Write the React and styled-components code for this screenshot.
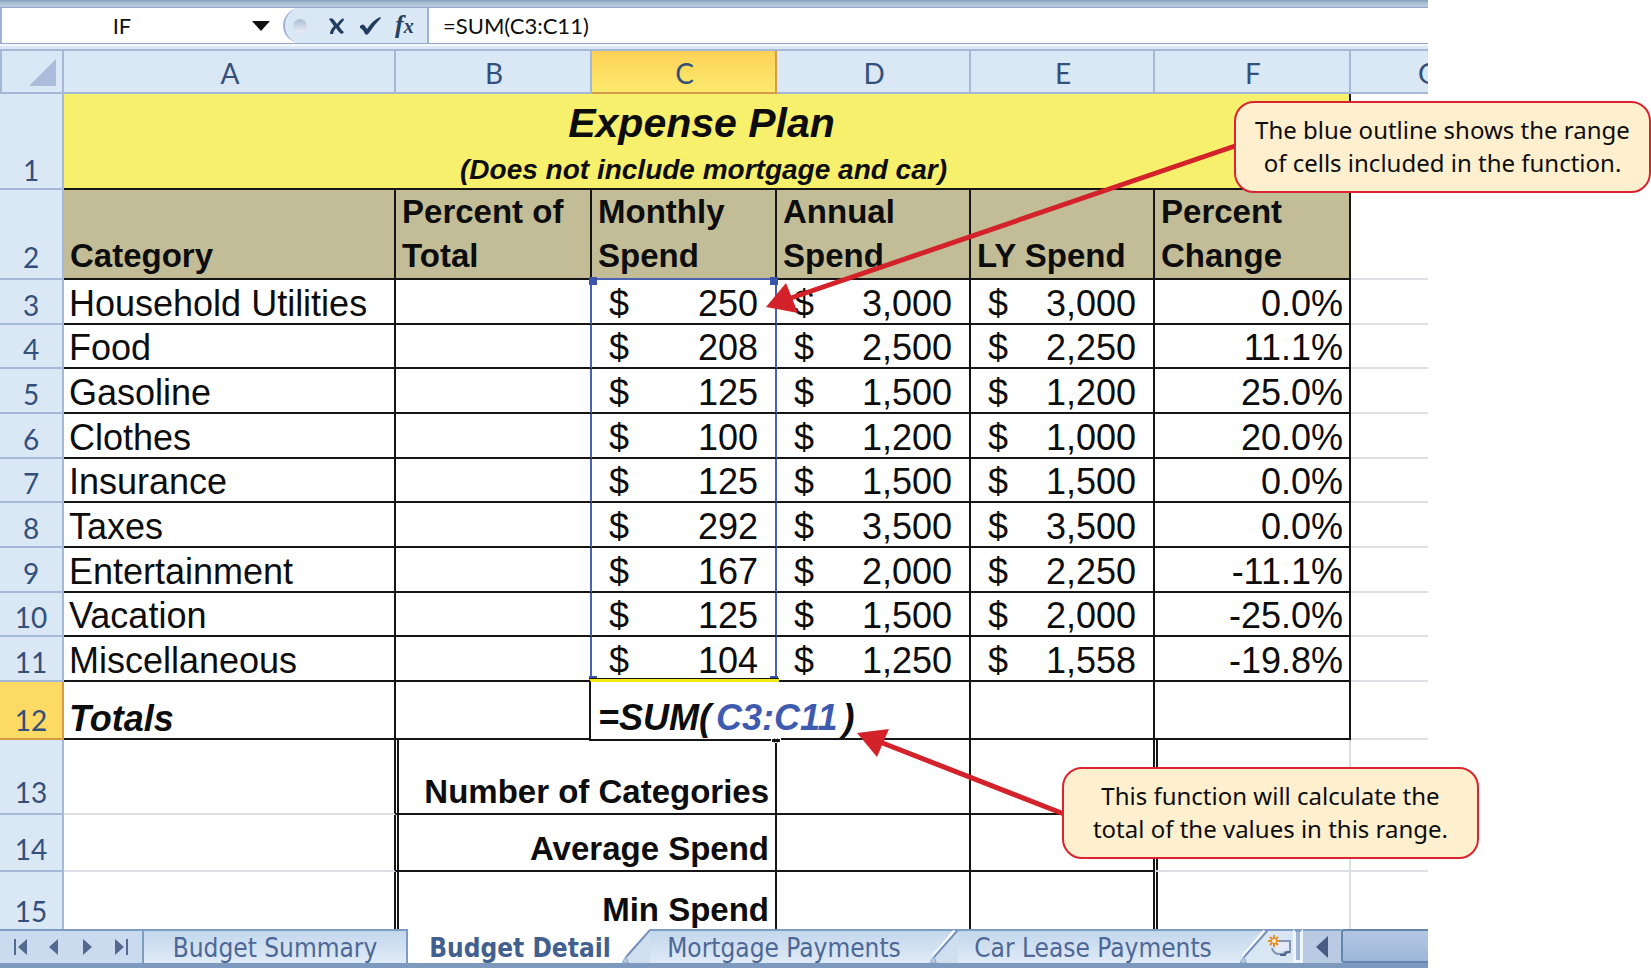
import React from "react";
import styled, { createGlobalStyle, css } from "styled-components";

const columns = [64, 332, 196, 185, 194, 184, 196, 77];

const expenses = [
  { row: 3, name: "Household Utilities", month: "250", annual: "3,000", ly: "3,000", change: "0.0%" },
  { row: 4, name: "Food", month: "208", annual: "2,500", ly: "2,250", change: "11.1%" },
  { row: 5, name: "Gasoline", month: "125", annual: "1,500", ly: "1,200", change: "25.0%" },
  { row: 6, name: "Clothes", month: "100", annual: "1,200", ly: "1,000", change: "20.0%" },
  { row: 7, name: "Insurance", month: "125", annual: "1,500", ly: "1,500", change: "0.0%" },
  { row: 8, name: "Taxes", month: "292", annual: "3,500", ly: "3,500", change: "0.0%" },
  { row: 9, name: "Entertainment", month: "167", annual: "2,000", ly: "2,250", change: "-11.1%" },
  { row: 10, name: "Vacation", month: "125", annual: "1,500", ly: "2,000", change: "-25.0%" },
  { row: 11, name: "Miscellaneous", month: "104", annual: "1,250", ly: "1,558", change: "-19.8%" },
];

const stats = [
  { row: 13, label: "Number of Categories", height: 75 },
  { row: 14, label: "Average Spend", height: 57 },
  { row: 15, label: "Min Spend", height: 57, last: true },
];

function Amount({ children }) {
  return (
    <Money>
      <span>$</span>
      <span>{children}</span>
    </Money>
  );
}

/* slanted left edge of a sheet tab */
function Slant({ $afterActive, $plain }) {
  return (
    <SlantSvg viewBox="0 0 28 34" $white={$afterActive} aria-hidden="true">
      {!$afterActive && <path d="M0 1 H28" stroke="#7f9cc3" strokeWidth="2" />}
      <path d="M28 0 V34 H3 Q2 30 6 26 Z" fill={$plain ? "#d9e6f4" : "#cfdff0"} />
      <path d="M25 2 L3 28" stroke="#fff" strokeWidth="4" fill="none" />
      <path d="M28 1 L5 27 Q2 31 6 34" stroke="#7590b8" strokeWidth="2" fill="none" />
      <path d="M4 27 L6 34 H0 Z" fill="#b9cde6" stroke="#8ba6ca" strokeWidth="1" />
    </SlantSvg>
  );
}

function FormulaBar() {
  return (
    <>
      <RibbonEdge />
      <Bar>
        <NameBox>
          <NameInput aria-label="Name box" defaultValue="IF" />
          <DropButton type="button" aria-label="Open name list">
            <svg width="18" height="10" viewBox="0 0 18 10">
              <path d="M0 0 H18 L9 10 Z" fill="#111" />
            </svg>
          </DropButton>
        </NameBox>
        <Tools>
          <Knob />
          <ToolButton type="button" aria-label="Cancel">
            <svg width="18" height="18" viewBox="0 0 18 18">
              <path d="M1 2 Q4 0 6 3 L9 7 Q12 3 15 1 L16 3 L11 9 Q14 14 16 15 L14 17 Q11 16 8 11 Q6 13 5 17 L2 17 Q2 13 6 9 Q3 5 1 2 Z" fill="#203d5f" />
            </svg>
          </ToolButton>
          <ToolButton type="button" aria-label="Enter">
            <svg width="23" height="18" viewBox="0 0 23 18">
              <path d="M1 9 Q4 6 6 9 L8 12 Q14 3 21 0 L22 1 Q16 7 10 16 Q8 19 6 17 Q4 12 1 11 Z" fill="#203d5f" />
            </svg>
          </ToolButton>
          <FxButton type="button" aria-label="Insert function">
            f<small>x</small>
          </FxButton>
        </Tools>
        <FormulaInput aria-label="Formula" defaultValue="=SUM(C3:C11)" />
      </Bar>
      <BarGap />
    </>
  );
}

function Sheet() {
  return (
    <Grid>
      <colgroup>
        {columns.map((w, i) => (
          <Column key={i} $w={w} />
        ))}
      </colgroup>
      <thead>
        <tr>
          <Corner>
            <svg width="27" height="27" viewBox="0 0 27 27" aria-hidden="true">
              <path d="M27 0 V27 H0 Z" fill="#abbcda" />
            </svg>
          </Corner>
          <ColHead>A</ColHead>
          <ColHead>B</ColHead>
          <ColHead $active>C</ColHead>
          <ColHead>D</ColHead>
          <ColHead>E</ColHead>
          <ColHead>F</ColHead>
          <ColHead $cut>G</ColHead>
        </tr>
      </thead>
      <tbody>
        <Row $h={96}>
          <RowHead>1</RowHead>
          <TitleCell colSpan={6}>
            <Title>Expense Plan</Title>
            <Subtitle>(Does not include mortgage and car)</Subtitle>
          </TitleCell>
          <Blank />
        </Row>
        <Row $h={90}>
          <RowHead $lift>2</RowHead>
          <Label>Category</Label>
          <Label>Percent of<br />Total</Label>
          <Label $range>
            Monthly<br />Spend
            <Handle $top $left />
            <Handle $top />
          </Label>
          <Label>Annual<br />Spend</Label>
          <Label>LY Spend</Label>
          <Label>Percent<br />Change</Label>
          <Blank />
        </Row>
        {expenses.map((e, i) => (
          <Row key={e.row} $h={i % 3 === 1 ? 44 : 45}>
            <RowHead>{e.row}</RowHead>
            <Cell>{e.name}</Cell>
            <Cell $range />
            <Cell $range>
              <Amount>{e.month}</Amount>
              {e.row === 11 && (
                <>
                  <Handle $left />
                  <Handle />
                </>
              )}
            </Cell>
            <Cell><Amount>{e.annual}</Amount></Cell>
            <Cell><Amount>{e.ly}</Amount></Cell>
            <Cell $right>{e.change}</Cell>
            <Blank />
          </Row>
        ))}
        <Row $h={58}>
          <RowHead $active>12</RowHead>
          <Cell $total>Totals</Cell>
          <Cell />
          <EditCell>
            <Editor>
              =SUM(<Ref>C3:C11</Ref>)
            </Editor>
            <FillHandle />
          </EditCell>
          <Cell />
          <Cell />
          <Cell />
          <Blank />
        </Row>
        {stats.map((s) => (
          <Row key={s.row} $h={s.height}>
            <RowHead $lift={!s.last}>{s.row}</RowHead>
            <Blank $edge />
            <StatLabel colSpan={2} $last={s.last}>{s.label}</StatLabel>
            <StatCell $last={s.last} />
            <StatCell $last={s.last} />
            <Blank $double $side />
            <Blank />
          </Row>
        ))}
      </tbody>
    </Grid>
  );
}

function TabBar() {
  return (
    <Tabs>
      <TabNav>
        <NavButton type="button" aria-label="First sheet">
          <svg width="14" height="18" viewBox="0 0 14 18"><path d="M0 1 H2 V17 H0 Z M13 1 V17 L4 9 Z" /></svg>
        </NavButton>
        <NavButton type="button" aria-label="Previous sheet">
          <svg width="14" height="18" viewBox="0 0 14 18"><path d="M11 1 V17 L2 9 Z" /></svg>
        </NavButton>
        <NavButton type="button" aria-label="Next sheet">
          <svg width="14" height="18" viewBox="0 0 14 18"><path d="M2 1 V17 L11 9 Z" /></svg>
        </NavButton>
        <NavButton type="button" aria-label="Last sheet">
          <svg width="14" height="18" viewBox="0 0 14 18"><path d="M12 1 H14 V17 H12 Z M1 1 V17 L10 9 Z" /></svg>
        </NavButton>
      </TabNav>
      <Tab type="button" $w={266} $first>Budget Summary</Tab>
      <Tab type="button" $w={214} $active>Budget Detail</Tab>
      <Slant $afterActive />
      <Tab type="button" $w={280}>Mortgage Payments</Tab>
      <Slant />
      <Tab type="button" $w={282}>Car Lease Payments</Tab>
      <Slant $plain />
      <NewSheet type="button" aria-label="Insert sheet">
        <svg width="24" height="24" viewBox="0 0 24 24">
          <path d="M8 5 H22 V16 H8 Z" fill="#e4ebf6" />
          <path d="M4 13 Q5 18 10 19 H16 Q16 16 22 17 V6 H12" fill="none" stroke="#8495b8" strokeWidth="2" />
          <path d="M12 20 H17 Q17 17 22 17" fill="none" stroke="#50648f" strokeWidth="2" />
          <path d="M6 0 V12 M0 6 H12 M2 2 L10 10 M10 2 L2 10" stroke="#df8d2b" strokeWidth="2" />
          <circle cx="6" cy="6" r="2" fill="#fff3c8" />
        </svg>
      </NewSheet>
      <Grip />
      <ScrollButton type="button" aria-label="Scroll left">
        <svg width="12" height="22" viewBox="0 0 12 22"><path d="M12 0 V22 L0 11 Z" fill="#475b85" /></svg>
      </ScrollButton>
      <Thumb />
    </Tabs>
  );
}

export default function App() {
  return (
    <>
      <GlobalStyle />
      <Page>
        <Workbook>
          <FormulaBar />
          <Sheet />
          <TabBar />
        </Workbook>
        <Arrows viewBox="0 0 1651 970" preserveAspectRatio="none" aria-hidden="true">
          <path d="M1235 146 L788 299" />
          <polygon points="766,307 786,283 798,313" />
          <path d="M1064 814 L880 742" />
          <polygon points="857,733 889,729 877,757" />
        </Arrows>
        <RangeNote>
          The blue outline shows the range<br />of cells included in the function.
        </RangeNote>
        <SumNote>
          This function will calculate the<br />total of the values in this range.
        </SumNote>
      </Page>
    </>
  );
}

const GlobalStyle = createGlobalStyle`
  * {
    box-sizing: border-box;
  }

  body {
    margin: 0;
    background: #fff;
    font-family: "Liberation Sans", Arial, sans-serif;
    color: #0d0d0d;
  }

  button, input {
    border: none;
    padding: 0;
    margin: 0;
    background: none;
    font: inherit;
    color: inherit;
    outline: none;
  }
`;

const Page = styled.main`
  position: relative;
  overflow: hidden;
`;

const Workbook = styled.div`
  width: 86.5%;
  overflow: hidden;
`;

const RibbonEdge = styled.div`
  height: 8px;
  border-bottom: 1px solid #93a8c8;
  background: linear-gradient(#7f9dbc, #a9bed5 40%, #bccbe0);
`;

const Bar = styled.div`
  display: flex;
  height: 36px;
  border-bottom: 1px solid #93a8c8;
  font-family: Lato, Carlito, sans-serif;
  font-size: 22px;
`;

const BarGap = styled.div`
  height: 7px;
  border-top: 2px solid #f4f8fc;
  border-bottom: 2px solid #a6b8d8;
  background: #dce8f5;
`;

const NameBox = styled.div`
  display: flex;
  align-items: center;
  width: 283px;
  border-left: 2px solid #9fb2d2;
`;

const NameInput = styled.input`
  width: 240px;
  text-align: center;
`;

const DropButton = styled.button`
  display: flex;
  margin-left: 10px;
`;

const Tools = styled.div`
  display: flex;
  align-items: center;
  gap: 13px;
  width: 146px;
  padding-left: 8px;
  background: #dae7f5;
  border-left: 2px solid #9fb2d2;
  border-right: 2px solid #9fb2d2;
  border-radius: 18px 0 0 18px;
`;

const Knob = styled.span`
  width: 14px;
  height: 14px;
  margin-right: 8px;
  border-radius: 50%;
  background: linear-gradient(#aebdd2, #e9eff7);
`;

const ToolButton = styled.button`
  display: flex;
`;

const FxButton = styled.button`
  font-family: "Liberation Serif", serif;
  font-size: 26px;
  line-height: 30px;
  font-weight: bold;
  font-style: italic;
  color: #26415f;

  small {
    font-size: 20px;
  }
`;

const FormulaInput = styled.input`
  flex: 1;
  padding-left: 14px;
`;

const Grid = styled.table`
  width: 100%;
  table-layout: fixed;
  border-collapse: separate;
  border-spacing: 0;
  font-size: 36px;
  line-height: 38px;

  td, th {
    padding: 0;
    vertical-align: bottom;
  }
`;

const Column = styled.col`
  width: ${(p) => (p.$w / 1428) * 100}%;
`;

const Row = styled.tr`
  height: ${(p) => p.$h}px;
`;

const headFont = css`
  font-family: Lato, Carlito, sans-serif;
  font-size: 28px;
  line-height: 34px;
  font-weight: normal;
  color: #34507a;
`;

const Corner = styled.th`
  background: #dae7f5;
  border: 2px solid #a6b8d8;
  border-top: none;
  text-align: right;

  svg {
    display: block;
    margin: 0 6px 6px auto;
  }
`;

const ColHead = styled.th`
  ${headFont}
  height: 43px;
  && {
    padding-bottom: 2px;
    padding-left: ${(p) => (p.$cut ? 67 : 2)}px;
  }
  overflow: hidden;
  background: ${(p) => (p.$active ? "linear-gradient(#ffd257, #fbea6e)" : "#dae7f5")};
  border-right: ${(p) => (p.$cut ? 0 : 2)}px solid ${(p) => (p.$active ? "#d69c45" : "#a6b8d8")};
  border-bottom: 2px solid ${(p) => (p.$active ? "#d69c45" : "#a6b8d8")};
`;

const RowHead = styled.th`
  ${headFont}
  && {
    padding-bottom: ${(p) => (p.$lift ? 4 : 1)}px;
  }
  background: ${(p) => (p.$active ? "#fdda63" : "#dae7f5")};
  border-right: 2px solid ${(p) => (p.$active ? "#d69c45" : "#a6b8d8")};
  border-bottom: 2px solid ${(p) => (p.$active ? "#d69c45" : "#a6b8d8")};

  tr:last-child > & {
    border-bottom: none;
  }
`;

const Cell = styled.td`
  position: relative;
  border-right: 2px solid ${(p) => (p.$range ? "#4a62b0" : "#151515")};
  border-bottom: 2px solid #151515;
  text-align: ${(p) => (p.$right ? "right" : "left")};
  white-space: nowrap;

  && {
    padding: 0 6px 0 5px;
  }

  ${(p) => p.$total && css`
    font-weight: bold;
    font-style: italic;
  `}
`;

const TitleCell = styled.td`
  background: #f7f06c;
  border-right: 2px solid #151515;
  border-bottom: 2px solid #151515;
  text-align: center;
  font-weight: bold;
  font-style: italic;

  && {
    padding-right: 6px;
  }
`;

const Title = styled.div`
  padding-right: 4px;
  font-size: 41px;
  line-height: 58px;
`;

const Subtitle = styled.div`
  font-size: 28px;
  line-height: 36px;
`;

const Label = styled.td`
  position: relative;
  background: #c3bd97;
  border-right: 2px solid #151515;
  border-bottom: 2px solid ${(p) => (p.$range ? "#4a62b0" : "#151515")};
  font-size: 33px;
  line-height: 44px;
  font-weight: bold;
  white-space: nowrap;

  && {
    padding-left: 6px;
  }
`;

const Money = styled.div`
  display: flex;
  justify-content: space-between;
  padding: 0 11px 0 12px;
`;

/* corner grips of the highlighted range */
const Handle = styled.i`
  position: absolute;
  width: 8px;
  height: ${(p) => (p.$top ? 8 : 6)}px;
  bottom: ${(p) => (p.$top ? -7 : -2)}px;
  ${(p) => (p.$left ? "left: -3px;" : "right: -3px;")}
  background: #3a55ab;
  z-index: 1;
`;

const Blank = styled.td`
  border-bottom: 2px solid #dddfe5;

  tr:last-child > & {
    border-bottom: none;
  }

  ${(p) => p.$side && "border-right: 2px solid #dddfe5;"}
  ${(p) => p.$edge && "border-right: 2px solid #151515;"}
  ${(p) => p.$double && "box-shadow: inset 1px 0 #fff, inset 3px 0 #151515;"}
`;

const EditCell = styled.td`
  position: relative;
  border-bottom: 2px solid #151515;
`;

const Editor = styled.div`
  position: absolute;
  inset: -3px -2px -3px -3px;
  z-index: 2;
  padding: 17px 0 0 7px;
  border: 2px solid #151515;
  border-top: 3px solid #f2ea12;
  border-right: none;
  box-shadow: 0 -1px #151515;
  background: #fff;
  font-weight: bold;
  font-style: italic;
  white-space: nowrap;
`;

const Ref = styled.span`
  padding: 0 5px;
  color: #3f5bb0;
`;

const FillHandle = styled.i`
  position: absolute;
  right: -4px;
  bottom: -5px;
  z-index: 3;
  width: 10px;
  height: 5px;
  border: 1px dashed #fff;
  background: #151515;
`;

const StatLabel = styled.td`
  border-right: 2px solid #151515;
  border-bottom: ${(p) => (p.$last ? 0 : 2)}px solid #151515;
  box-shadow: inset 1px 0 #fff, inset 3px 0 #151515;
  font-size: 33px;
  font-weight: bold;
  text-align: right;
  white-space: nowrap;

  && {
    padding: 0 6px ${(p) => (p.$last ? 0 : 2)}px 0;
  }
`;

const StatCell = styled.td`
  border-right: 2px solid #151515;
  border-bottom: ${(p) => (p.$last ? 0 : 2)}px solid #151515;
`;

const Tabs = styled.div`
  display: flex;
  height: 39px;
  border-bottom: 5px solid #7e99be;
  background: #cfdff0;
  font-family: "DejaVu Sans Condensed", Tahoma, sans-serif;
  font-size: 26px;
  line-height: 30px;
  color: #4d6896;
`;

const TabNav = styled.div`
  display: flex;
  align-items: center;
  justify-content: space-between;
  flex-shrink: 0;
  width: 142px;
  padding: 0 14px;
  border-top: 2px solid #7f9cc3;
  background: #cbdbef;
`;

const NavButton = styled.button`
  display: flex;

  svg {
    fill: #54698f;
  }
`;

const Tab = styled.button`
  width: ${(p) => p.$w}px;
  flex-shrink: 0;
  padding: 1px 12px 0 0;
  overflow: hidden;
  white-space: nowrap;
  background: linear-gradient(#c3d7ec, #dfeaf6);
  border-top: 2px solid #7f9cc3;

  ${(p) => p.$first && css`
    padding-right: 0;
    border-left: 2px solid #7f9cc3;
    border-right: 2px solid #7f9cc3;
  `}

  ${(p) => p.$active && css`
    padding-right: 0;
    padding-left: 10px;
    font-weight: bold;
    background: #fff;
    border-top-color: #fff;
    color: #41608f;
  `}
`;

const SlantSvg = styled.svg`
  width: 28px;
  height: 34px;
  flex-shrink: 0;
  background: ${(p) => (p.$white ? "#fff" : "linear-gradient(#c3d7ec, #dfeaf6)")};
`;

const NewSheet = styled.button`
  display: flex;
  align-items: center;
  flex-shrink: 0;
  width: 25px;
  border-top: 2px solid #7f9cc3;
  background: #d9e6f4;
`;

const Grip = styled.span`
  width: 10px;
  flex-shrink: 0;
  border: 3px solid #f0f5fb;
  border-top-color: #7f9cc3;
  background: #a3b7d5;
`;

const ScrollButton = styled.button`
  display: flex;
  align-items: center;
  justify-content: center;
  flex-shrink: 0;
  width: 38px;
  border-top: 2px solid #7f9cc3;
  background: #b9cbe2;
`;

const Thumb = styled.div`
  flex: 1;
  border: 2px solid #6484b2;
  border-right: none;
  border-radius: 3px 0 0 3px;
  background: linear-gradient(#b3c7e3, #9db7da);
`;

const Arrows = styled.svg`
  position: absolute;
  top: 0;
  left: 0;
  width: 100%;
  height: 970px;
  pointer-events: none;
  z-index: 4;

  path {
    stroke: #d4222b;
    stroke-width: 5;
  }

  polygon {
    fill: #d4222b;
  }
`;

const Note = styled.aside`
  position: absolute;
  z-index: 5;
  width: 417px;
  padding: 10px 0 12px;
  border: 2px solid #d8252f;
  border-radius: 20px;
  background: #feefcf;
  font-family: "Noto Sans", "Open Sans", sans-serif;
  font-size: 24px;
  line-height: 33px;
  text-align: center;
  white-space: nowrap;
`;

const RangeNote = styled(Note)`
  top: 101px;
  right: 0;
`;

const SumNote = styled(Note)`
  top: 767px;
  right: 172px;
`;
